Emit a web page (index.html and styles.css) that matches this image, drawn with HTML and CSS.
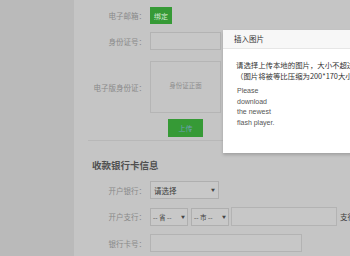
FILE: index.html
```html
<!DOCTYPE html>
<html lang="zh-CN">
  <head>
    <meta charset="UTF-8" />
    <meta name="viewport" content="width=device-width, initial-scale=1.0" />
    <title>账户资料</title>
    <link rel="stylesheet" href="styles.css">
  </head>
  <body>
    <div class="page">
      <div class="sidebar"></div>
      <div class="main">
        <div class="row row-email">
          <span class="label">电子邮箱：</span>
          <button class="btn-green btn-bind">绑定</button>
        </div>
        <div class="row row-id">
          <span class="label">身份证号：</span>
          <input type="text" class="field field-id" />
        </div>
        <div class="row row-photo">
          <span class="label">电子版身份证：</span>
          <div class="photo-box"><span>身份证正面</span></div>
        </div>
        <div class="row row-upload">
          <div class="upload-wrap">
            <button class="btn-green btn-upload">上传</button>
          </div>
        </div>
        <div class="divider"></div>

        <h3 class="section-title">收款银行卡信息</h3>
        <div class="row row-bank">
          <span class="label">开户银行：</span>
          <div class="select select-bank">请选择<span class="arrow">▼</span></div>
        </div>
        <div class="row row-branch">
          <span class="label">开户支行：</span>
          <div class="select select-small">-- 省 --<span class="arrow">▼</span></div>
          <div class="select select-small">-- 市 --<span class="arrow">▼</span></div>
          <input type="text" class="field field-branch" />
          <span class="hint">支行名称</span>
        </div>
        <div class="row row-card">
          <span class="label">银行卡号：</span>
          <input type="text" class="field field-card" />
        </div>
      </div>
    </div>

    <div class="dialog">
      <div class="dialog-head">插入图片</div>
      <div class="dialog-body">
        <p class="dialog-tip">请选择上传本地的图片，大小不超过2M<br />（图片将被等比压缩为200*170大小）</p>
        <div class="flash">Please download the newest flash player.</div>
      </div>
    </div>
  </body>
</html>
```

FILE: styles.css
```css
html,
body {
  margin: 0;
  height: 100%;
  overflow: hidden;
}
body {
  font-family: "Noto Sans CJK SC", "Liberation Sans", sans-serif;
  font-size: 7.5px;
  color: #888;
  background: #c5c5c5;
}
.page {
  display: flex;
  height: 100%;
}
.sidebar {
  width: 74px;
  background: #bababa;
  flex-shrink: 0;
}
.main {
  flex: 1;
  padding-top: 7px;
  background: #c5c5c5;
}
.row {
  display: flex;
  align-items: center;
  margin-bottom: 8px;
}
.label {
  width: 72px;
  margin-right: 4px;
  text-align: right;
  color: #898989;
  white-space: nowrap;
}
.btn-green {
  border: none;
  padding: 0;
  background: #369a36;
  color: #d8ead8;
  font-family: inherit;
  font-size: 7px;
}
.btn-bind {
  width: 22px;
  height: 17px;
}
.field {
  box-sizing: border-box;
  height: 18px;
  margin: 0;
  padding: 0 3px;
  border: 1px solid #b3b3b3;
  background: #c7c7c7;
}
.field-id {
  width: 71px;
}
.row-id {
  margin-bottom: 11px;
}
.row-photo {
  margin-bottom: 6px;
}
.photo-box {
  box-sizing: border-box;
  width: 71px;
  height: 52px;
  border: 1px solid #b5b5b5;
  display: flex;
  align-items: center;
  justify-content: center;
  color: #8e8e8e;
  font-size: 6.5px;
  padding-bottom: 4px;
}
.row-upload {
  margin-bottom: 3px;
}
.upload-wrap {
  width: 71px;
  margin-left: 76px;
  display: flex;
  justify-content: center;
}
.btn-upload {
  width: 35px;
  height: 18px;
  color: #6f9fb8;
}
.divider {
  height: 1px;
  margin-left: 14px;
  background: #b8b8b8;
}
.section-title {
  margin: 17px 0 9px 18px;
  font-size: 9.5px;
  line-height: 14px;
  font-weight: bold;
  color: #505050;
}
.select {
  box-sizing: border-box;
  height: 18px;
  border: 1px solid #afafaf;
  background: #c8c8c8;
  display: flex;
  align-items: center;
  padding: 0 3px;
  color: #3c3c3c;
  font-size: 7.5px;
  white-space: nowrap;
}
.arrow {
  margin-left: auto;
  font-size: 4px;
  color: #444;
}
.select-bank {
  width: 69px;
  height: 18px;
}
.select-small {
  width: 38px;
  margin-right: 3px;
  font-size: 6.5px;
  padding: 0 2px;
}
.field-branch {
  width: 106px;
  height: 19px;
  margin-left: -1px;
}
.hint {
  margin-left: 3px;
  color: #3c3c3c;
  white-space: nowrap;
}
.field-card {
  width: 152px;
}
.dialog {
  position: absolute;
  left: 223px;
  top: 30px;
  width: 260px;
  height: 123px;
  background: #fff;
  box-shadow: 0 2px 3px rgba(0, 0, 0, 0.18);
}
.dialog-head {
  height: 18px;
  line-height: 18px;
  padding-left: 11px;
  background: #f7f7f7;
  border-bottom: 1px solid #e6e6e6;
  color: #333;
  font-size: 7.5px;
}
.dialog-body {
  padding: 11px 14px 0;
  color: #333;
}
.dialog-tip {
  margin: 0 0 0 -1px;
  font-size: 7.4px;
  line-height: 10.5px;
  white-space: nowrap;
}
.flash {
  width: 40px;
  margin-top: 5px;
  font-family: "Liberation Sans", sans-serif;
  font-size: 7px;
  line-height: 10.7px;
  color: #555;
}
```
